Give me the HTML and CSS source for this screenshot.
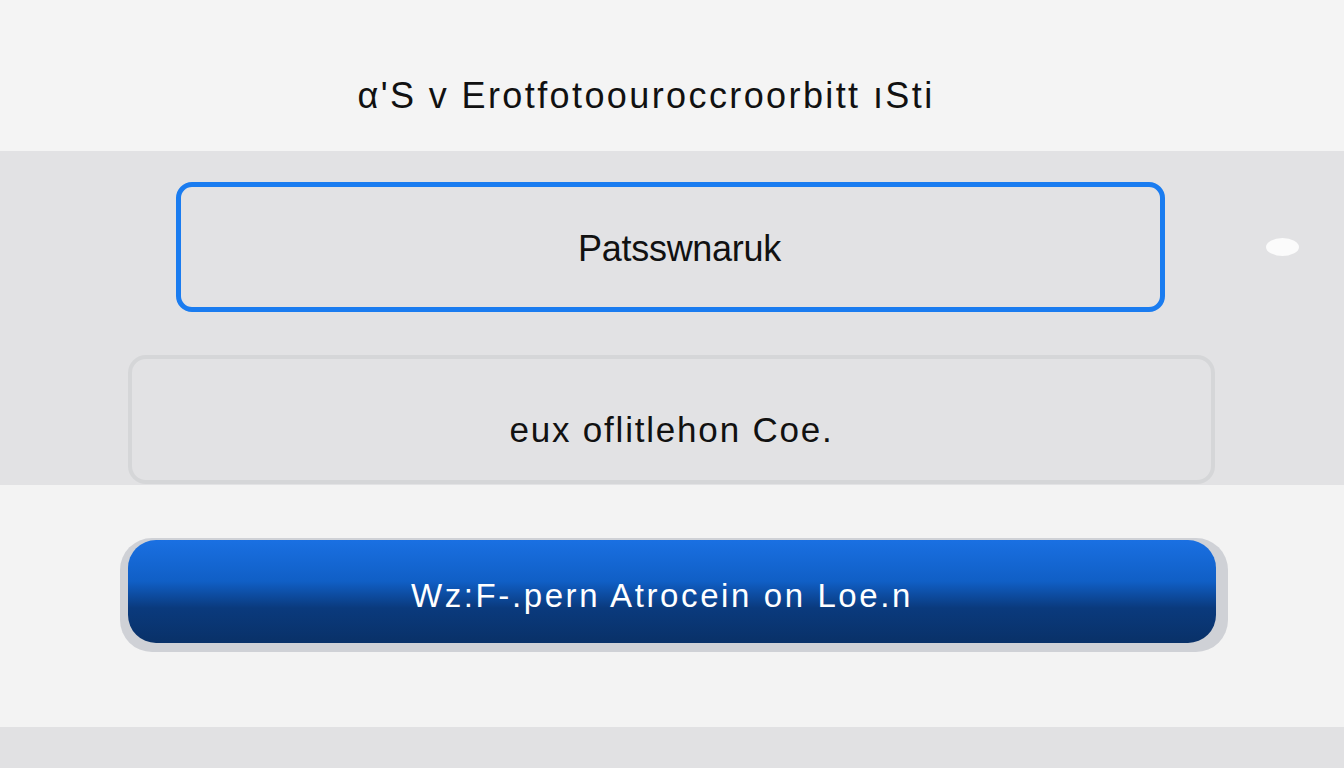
FILE: index.html
```html
<!DOCTYPE html>
<html lang="en">
<head>
    <meta charset="UTF-8">
    <meta name="viewport" content="width=device-width, initial-scale=1.0">
    <title>Login</title>
    <link rel="stylesheet" href="styles.css">
</head>
<body>

    <header class="top">
        <h1 class="title">α'S v Erotfotoouroccroorbitt ıSti</h1>
    </header>

    <section class="fields">
        <div class="field field-active">
            <span class="field-text pass-text">Patsswnaruk</span>
        </div>
        <span class="blob"></span>
        <div class="field field-plain">
            <span class="field-text code-text">eux oflitlehon Coe.</span>
        </div>
    </section>

    <section class="actions">
        <div class="btn-wrap">
            <button type="button" class="btn">Wz:F-.pern Atrocein on Loe.n</button>
        </div>
    </section>

    <footer class="bottom"></footer>

</body>
</html>
```

FILE: styles.css
```css
* {
    box-sizing: border-box;
}
body {
    margin: 0;
    height: 768px;
    font-family: "Liberation Sans", Arial, sans-serif;
    color: #111;
    display: flex;
    flex-direction: column;
    background: #e1e1e3;
}
.top {
    height: 151px;
    background: #f4f4f4;
    display: flex;
    align-items: center;
    justify-content: center;
}
.title {
    margin: 40px 52px 0 0;
    font-size: 36px;
    font-weight: normal;
    letter-spacing: 2.4px;
}
.fields {
    position: relative;
    height: 334px;
    background: #e2e2e4;
    padding-top: 31px;
}
.field {
    display: flex;
    align-items: center;
    justify-content: center;
    background: #e2e2e4;
}
.field-active {
    width: 989px;
    height: 130px;
    margin-left: 176px;
    border: 5px solid #1a7cf0;
    border-radius: 16px;
    padding: 4px 0 0 18px;
}
.field-plain {
    width: 1087px;
    height: 129px;
    margin-left: 128px;
    margin-top: 43px;
    border: 4px solid #d5d6d8;
    border-radius: 18px;
    padding-top: 20px;
}
.field-text {
    font-size: 36px;
}
.pass-text {
    letter-spacing: -0.3px;
}
.code-text {
    font-size: 35px;
    letter-spacing: 1.8px;
}
.blob {
    position: absolute;
    left: 1266px;
    top: 87px;
    width: 33px;
    height: 18px;
    border-radius: 50%;
    background: #fbfbfb;
}
.actions {
    height: 242px;
    background: #f3f3f3;
    padding-top: 53px;
}
.btn-wrap {
    width: 1108px;
    height: 114px;
    margin-left: 120px;
    padding: 2px 12px 9px 8px;
    background: #cfd1d6;
    border-radius: 32px;
}
.btn {
    width: 100%;
    height: 100%;
    border: none;
    border-radius: 28px;
    background: linear-gradient(#1a70e2 0%, #105fc6 40%, #0a3a7d 66%, #093168 100%);
    color: #fff;
    font-family: "Liberation Sans", Arial, sans-serif;
    font-size: 33px;
    letter-spacing: 2.6px;
    padding: 8px 20px 0 0;
}
.bottom {
    flex: 1;
    background: #e1e1e3;
}
```
